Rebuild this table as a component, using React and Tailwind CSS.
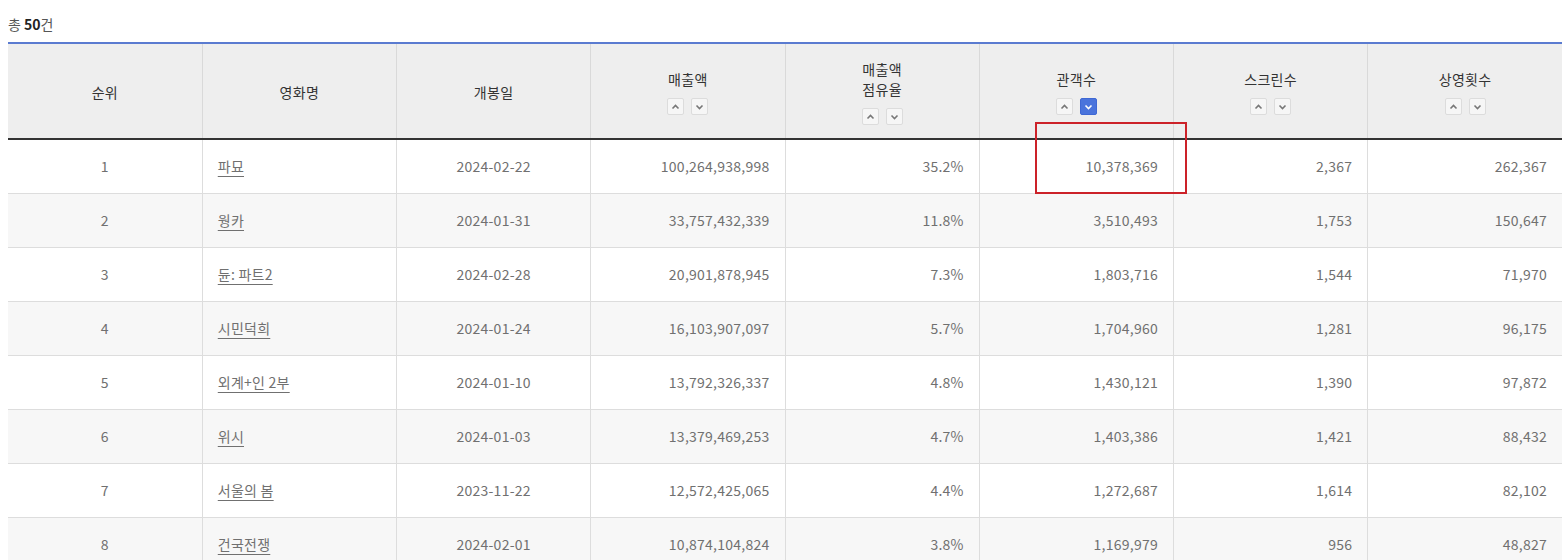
import React from "react";

const rows = [
  ["1", "파묘", "2024-02-22", "100,264,938,998", "35.2%", "10,378,369", "2,367", "262,367"],
  ["2", "웡카", "2024-01-31", "33,757,432,339", "11.8%", "3,510,493", "1,753", "150,647"],
  ["3", "듄: 파트2", "2024-02-28", "20,901,878,945", "7.3%", "1,803,716", "1,544", "71,970"],
  ["4", "시민덕희", "2024-01-24", "16,103,907,097", "5.7%", "1,704,960", "1,281", "96,175"],
  ["5", "외계+인 2부", "2024-01-10", "13,792,326,337", "4.8%", "1,430,121", "1,390", "97,872"],
  ["6", "위시", "2024-01-03", "13,379,469,253", "4.7%", "1,403,386", "1,421", "88,432"],
  ["7", "서울의 봄", "2023-11-22", "12,572,425,065", "4.4%", "1,272,687", "1,614", "82,102"],
  ["8", "건국전쟁", "2024-02-01", "10,874,104,824", "3.8%", "1,169,979", "956", "48,827"],
];

// little up / down sort buttons
const SortBtns = ({ active }) => (
  <div className="flex justify-center gap-[7px] mt-[9px]">
    <span className="w-[17px] h-[17px] border border-[#dcdcdc] bg-[#f6f6f6] rounded-[2px] flex items-center justify-center">
      <svg width="9" height="6" viewBox="0 0 9 6">
        <polyline points="1.5,4.5 4.5,1.5 7.5,4.5" fill="none" stroke="#777" strokeWidth="1.6" />
      </svg>
    </span>
    <span
      className={
        active
          ? "w-[17px] h-[17px] border border-[#3f68d4] bg-[#4a74dc] rounded-[2px] flex items-center justify-center"
          : "w-[17px] h-[17px] border border-[#dcdcdc] bg-[#f6f6f6] rounded-[2px] flex items-center justify-center"
      }
    >
      <svg width="9" height="6" viewBox="0 0 9 6">
        <polyline points="1.5,1.5 4.5,4.5 7.5,1.5" fill="none" stroke={active ? "#fff" : "#777"} strokeWidth="1.6" />
      </svg>
    </span>
  </div>
);

const headers = [
  { label: ["순위"] },
  { label: ["영화명"] },
  { label: ["개봉일"] },
  { label: ["매출액"], sort: true },
  { label: ["매출액", "점유율"], sort: true },
  { label: ["관객수"], sort: true, active: true },
  { label: ["스크린수"], sort: true },
  { label: ["상영횟수"], sort: true },
];

export default function App() {
  return (
    <div className="bg-white w-[1565px] h-[560px] overflow-hidden px-2 text-[14px]" style={{ fontFamily: '"Noto Sans CJK KR", "Noto Sans", sans-serif' }}>
      {/* total count */}
      <p className="pt-[14px] mb-[8px] leading-[20px] text-[#555]">
        총 <b className="text-[#222]">50</b>건
      </p>

      <div className="relative w-[1554px]">
        <table className="w-full table-fixed border-collapse border-t-2 border-[#5a7bd0]">
          <thead>
            <tr className="bg-[#eeeeee] h-[96px] border-b-2 border-[#333]">
              {headers.map((h, i) => (
                <th
                  key={i}
                  className="font-normal text-[#333] text-center align-middle border-l border-[#d9d9d9] first:border-l-0 leading-[20px] pt-[2px] tracking-[0.3px]"
                >
                  {h.label.map((l) => (
                    <div key={l}>{l}</div>
                  ))}
                  {h.sort && <SortBtns active={h.active} />}
                </th>
              ))}
            </tr>
          </thead>
          <tbody>
            {rows.map((r, i) => (
              <tr key={i} className={i % 2 === 1 ? "bg-[#f7f7f7] h-[54px] border-b border-[#dddddd]" : "bg-white h-[54px] border-b border-[#dddddd]"}>
                {r.map((c, j) => (
                  <td
                    key={j}
                    className={
                      "text-[#707070] tracking-[0.25px] border-l border-[#dddddd] first:border-l-0 " +
                      (j === 0 || j === 2 ? "text-center" : j === 1 ? "text-left pl-[15px]" : "text-right pr-[15px]")
                    }
                  >
                    {j === 1 ? <span className="underline underline-offset-[4px]">{c}</span> : c}
                  </td>
                ))}
              </tr>
            ))}
          </tbody>
        </table>
        {/* highlight box */}
        <div className="absolute left-[1027px] top-[80px] w-[152px] h-[72px] border-2 border-[#cc2229]"></div>
      </div>
    </div>
  );
}
